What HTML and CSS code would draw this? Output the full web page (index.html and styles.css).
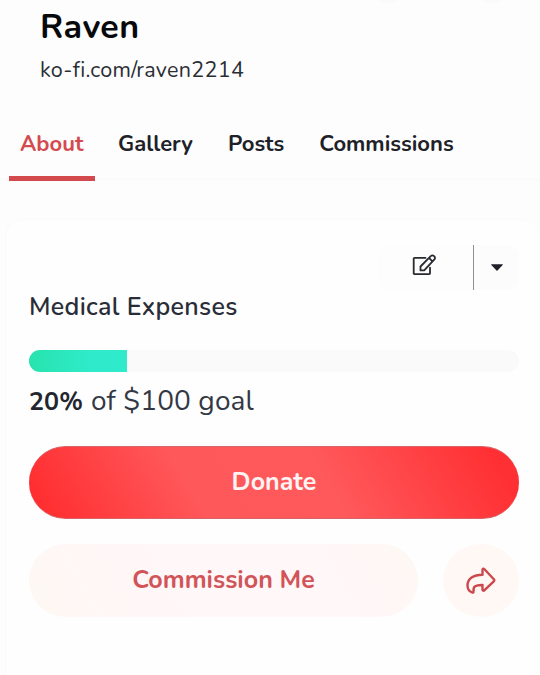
FILE: index.html
```html
<!DOCTYPE html>
<html lang="en">
	<head>
		<meta charset="UTF-8" />
		<meta name="viewport" content="width=device-width, initial-scale=1.0" />
		<title>Raven</title>
		<link rel="stylesheet" href="styles.css">
	</head>
	<body>
		<div class="page">
			<header class="profile">
				<div class="profile-actions">
					<span></span>
					<span></span>
				</div>
				<h1>Raven</h1>
				<p>ko-fi.com/raven2214</p>
			</header>

			<nav class="tabs">
				<a class="tab active" href="#about">About</a>
				<a class="tab" href="#gallery">Gallery</a>
				<a class="tab" href="#posts">Posts</a>
				<a class="tab" href="#commissions">Commissions</a>
			</nav>

			<section class="card">
				<div class="toolbar">
					<button class="edit" aria-label="Edit">
						<svg width="24" height="24" viewBox="0 0 24 24">
							<path d="M13.500 3.900H2.500a.8.8 0 0 0-.8.8v14.700a.8.8 0 0 0 .8.8h14.700a.8.8 0 0 0 .8-.8v-5.700" />
							<path d="M8.500 16.400v-3.900L19 1.900a1.900 1.900 0 0 1 2.800 0l.6.6a1.900 1.900 0 0 1 0 2.800L12.200 16.400zM17 3.900l3.400 3.400" />
						</svg>
					</button>
					<button class="more" aria-label="More">
						<svg width="12" height="7" viewBox="0 0 12 7">
							<path d="M.6.3h10.800a.5.5 0 0 1 .3.800L6.500 6.400a.7.7 0 0 1-1 0L.3 1.100A.5.5 0 0 1 .6.3z" />
						</svg>
					</button>
				</div>

				<h2>Medical Expenses</h2>
				<div class="progress">
					<div class="progress-bar" style="width: 20%"></div>
				</div>
				<p class="goal">
					<strong>20%</strong>
					<span>of $100 goal</span>
				</p>

				<button class="donate">Donate</button>
				<div class="actions">
					<button class="commission">Commission Me</button>
					<button class="share" aria-label="Share">
						<svg width="30" height="28" viewBox="0 0 30 28">
							<path d="M16.500 2.800v5C7.500 7.800 1.500 11.500 1.500 18.500c0 3.300 1.900 5.900 4.700 7 .9.300 1.600-.3 1.400-1.300-.7-4.500 2-6.400 8.900-6.200v4.500c0 1.300 1.100 1.600 2 .7l9.300-8.900c.7-.7.7-1.400 0-2.100l-9.300-9.900c-.9-.9-2-.7-2 .5z" />
						</svg>
					</button>
				</div>
			</section>
		</div>
	</body>
</html>
```
FILE: styles.css
```css
* {
	box-sizing: border-box;
}

body {
	margin: 0;
	background-color: #fdfdfd;
	color: #202128;
	font-family: Nunito, Lato, "Open Sans", sans-serif;
}

.page {
	height: 675px;
	display: flex;
	flex-direction: column;
	overflow: hidden;
}

h1,
h2,
p {
	margin: 0;
	white-space: nowrap;
}

button {
	border: 0;
	padding: 0;
	font-family: inherit;
	display: flex;
	align-items: center;
	justify-content: center;
}

svg {
	display: block;
}

/* Profile */
.profile {
	position: relative;
	height: 112px;
	padding: 7px 0 0 40px;
}

.profile h1 {
	font-size: 34px;
	font-weight: 700;
	line-height: 40px;
	color: #08090b;
	letter-spacing: 0.4px;
}

.profile p {
	margin-top: 9px;
	font-size: 21.5px;
	line-height: 28px;
	color: #2b2d35;
	letter-spacing: 0.3px;
}

.profile-actions {
	position: absolute;
	top: -41px;
	right: 26px;
	display: flex;
	gap: 60px;
}

.profile-actions span {
	width: 44px;
	height: 44px;
	border-radius: 50%;
	background: #fafaf8;
}

/* Tabs */
.tabs {
	display: flex;
	height: 69px;
	padding-left: 9px;
	box-shadow: inset 0 -3px #fbfbfb;
}

.tab {
	padding: 17px 12px 0 11px;
	margin-right: 12px;
	font-size: 22px;
	font-weight: 700;
	line-height: 30px;
	color: #202128;
	text-decoration: none;
	white-space: nowrap;
}

.tab.active {
	width: 86px;
	color: #d44b4f;
	border-bottom: 5px solid #d24a4e;
}

/* Goal card */
.card {
	flex: 1;
	margin: 38px 0 0 5px;
	padding: 25px 21px 0 23px;
	background: #fefefe;
	border-left: 1px solid #f9f9f9;
	border-top: 1px solid #fbfbfb;
	border-radius: 18px 18px 0 0;
}

.toolbar {
	display: flex;
	width: 141px;
	height: 45px;
	margin-left: auto;
}

.edit {
	width: 96px;
	padding-right: 4px;
	background: #fdfdfd;
	border-radius: 12px 0 0 12px;
	border-right: 1px solid #8e8e90;
}

.edit svg {
	margin-top: -3px;
	fill: none;
	stroke: #292a2f;
	stroke-width: 1.8;
	stroke-linejoin: round;
	stroke-linecap: round;
}

.more {
	flex: 1;
	background: #fcfcfc;
	border-radius: 0 12px 12px 0;
}

.more svg {
	fill: #202128;
}

h2 {
	font-size: 25px;
	font-weight: 600;
	line-height: 34px;
	color: #292d38;
	letter-spacing: 0.33px;
}

.progress {
	height: 22px;
	margin-top: 26px;
	background: #fafafa;
	border-radius: 11px;
	overflow: hidden;
}

.progress-bar {
	height: 100%;
	background: linear-gradient(90deg, #27e3ae, #30ebcb 65%);
}

.goal {
	display: flex;
	align-items: baseline;
	gap: 8px;
	margin-top: 9px;
	line-height: 40px;
	font-size: 28px;
	color: #343844;
	letter-spacing: 0.12px;
}

.goal strong {
	font-size: 25px;
	font-weight: 700;
	color: #23262f;
}

.donate {
	width: 100%;
	height: 73px;
	margin-top: 24px;
	padding-bottom: 2px;
	border-radius: 37px;
	border-top: 1px solid #d66468;
	border-bottom: 1px solid #d66468;
	background: linear-gradient(60deg, #ff2f31 4%, #ff585b 34%, #ff595c 60%, #ff3033 94%);
	color: #fff4f3;
	font-size: 25px;
	font-weight: 700;
}

.actions {
	display: flex;
	gap: 25px;
	margin-top: 25px;
}

.commission {
	flex: 1;
	height: 73px;
	padding-bottom: 2px;
	border-radius: 37px;
	background: linear-gradient(60deg, #fef8f4, #fff7f8 40%, #fff7f8 75%, #fef8f4);
	color: #d15558;
	font-size: 25px;
	font-weight: 700;
}

.share {
	width: 76px;
	height: 73px;
	border-radius: 50%;
	background: #fff8f5;
}

.share svg {
	fill: none;
	stroke: #cb494c;
	stroke-width: 2.4;
	stroke-linejoin: round;
}
```
